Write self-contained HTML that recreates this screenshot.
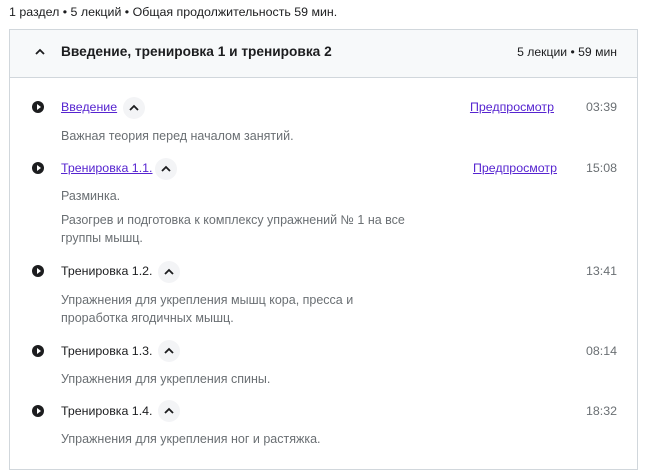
<!DOCTYPE html>
<html><head><meta charset="utf-8"><style>
*{margin:0;padding:0;box-sizing:border-box}
body{width:646px;height:475px;background:#fff;font-family:"Liberation Sans","Noto Sans CJK SC",sans-serif;color:#1c1d1f;position:relative;overflow:hidden;font-size:12.4px}
.a{position:absolute;white-space:nowrap}
.box{position:absolute;left:9px;top:29px;width:629px;height:441px;border:1px solid #d1d7dc}
.hd{position:absolute;left:0;top:0;right:0;height:48px;background:#f7f9fa;border-bottom:1px solid #d1d7dc}
.ic{position:absolute;width:12px;height:12px;border-radius:50%;background:#1c1d1f}
.ic:after{content:"";position:absolute;left:4.5px;top:3px;border-left:4px solid #fff;border-top:3px solid transparent;border-bottom:3px solid transparent}
.lk{color:#5624d0;text-decoration:underline}
.cb{position:absolute;width:22px;height:22px;border-radius:50%;background:#f3f4f6}
.cb svg{position:absolute;left:6px;top:7px}
.d{color:#6a6f73;font-size:12.5px;line-height:18px}
.t{color:#6a6f73;right:29px}
</style></head><body>
<div class="a" style="left:9px;top:5px">1 раздел • 5 лекций • Общая продолжительность 59 мин.</div>
<div class="box"><div class="hd"></div></div>
<svg class="a" style="left:35px;top:48px" width="10" height="8"><path d="M1 6 L5 2 L9 6" stroke="#1c1d1f" stroke-width="1.8" fill="none"/></svg>
<div class="a" style="left:61px;top:44px;font-weight:bold;font-size:13.7px">Введение, тренировка 1 и тренировка 2</div>
<div class="a" style="right:29px;top:45px;font-size:12.2px">5 лекции • 59 мин</div>

<div class="ic" style="left:32px;top:101px"></div>
<div class="a lk" style="left:61px;top:100px">Введение</div>
<div class="cb" style="left:123px;top:97px"><svg width="10" height="8"><path d="M1 6 L5 2 L9 6" stroke="#1c1d1f" stroke-width="1.8" fill="none"/></svg></div>
<div class="a lk" style="right:92px;top:100px">Предпросмотр</div>
<div class="a t" style="top:100px">03:39</div>
<div class="a d" style="left:61px;top:127px">Важная теория перед началом занятий.</div>

<div class="ic" style="left:32px;top:162px"></div>
<div class="a lk" style="left:61px;top:161px">Тренировка 1.1.</div>
<div class="cb" style="left:155px;top:158px"><svg width="10" height="8"><path d="M1 6 L5 2 L9 6" stroke="#1c1d1f" stroke-width="1.8" fill="none"/></svg></div>
<div class="a lk" style="right:89px;top:161px">Предпросмотр</div>
<div class="a t" style="top:161px">15:08</div>
<div class="a d" style="left:61px;top:187px">Разминка.</div>
<div class="a d" style="left:61px;top:211px">Разогрев и подготовка к комплексу упражнений № 1 на все<br>группы мышц.</div>

<div class="ic" style="left:32px;top:265px"></div>
<div class="a" style="left:61px;top:264px">Тренировка 1.2.</div>
<div class="cb" style="left:158px;top:261px"><svg width="10" height="8"><path d="M1 6 L5 2 L9 6" stroke="#1c1d1f" stroke-width="1.8" fill="none"/></svg></div>
<div class="a t" style="top:264px">13:41</div>
<div class="a d" style="left:61px;top:291px">Упражнения для укрепления мышц кора, пресса и<br>проработка ягодичных мышц.</div>

<div class="ic" style="left:32px;top:345px"></div>
<div class="a" style="left:61px;top:344px">Тренировка 1.3.</div>
<div class="cb" style="left:158px;top:340px"><svg width="10" height="8"><path d="M1 6 L5 2 L9 6" stroke="#1c1d1f" stroke-width="1.8" fill="none"/></svg></div>
<div class="a t" style="top:344px">08:14</div>
<div class="a d" style="left:61px;top:370px">Упражнения для укрепления спины.</div>

<div class="ic" style="left:32px;top:405px"></div>
<div class="a" style="left:61px;top:404px">Тренировка 1.4.</div>
<div class="cb" style="left:158px;top:400px"><svg width="10" height="8"><path d="M1 6 L5 2 L9 6" stroke="#1c1d1f" stroke-width="1.8" fill="none"/></svg></div>
<div class="a t" style="top:404px">18:32</div>
<div class="a d" style="left:61px;top:430px">Упражнения для укрепления ног и растяжка.</div>
</body></html>
